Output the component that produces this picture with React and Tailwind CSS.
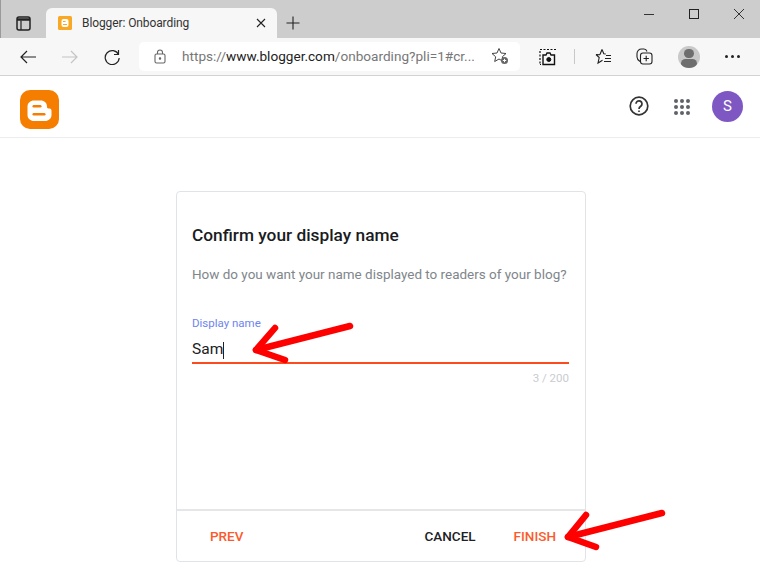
import React from "react";

function Logo() {
  return (
    <svg className="mt-[5px]" width="39" height="39" viewBox="0 0 39 39">
      <rect width="39" height="39" rx="10" fill="#f57d00" />
      <path d="M14 10.500h6.500c4 0 6.500 2.500 6.500 6v.5c0 1.200 1 1.500 2.500 1.500s2 1 2 2.500v4c0 3.500-3 6-6.500 6H14c-3.500 0-6.500-2.500-6.500-6V16.500c0-3.500 3-6 6.500-6z" fill="#fff" />
      <rect x="12.500" y="15" width="9" height="2.500" rx="1.250" fill="#f57d00" />
      <rect x="12.500" y="23" width="13" height="2.500" rx="1.250" fill="#f57d00" />
    </svg>
  );
}

function Favicon() {
  return (
    <svg width="14" height="14" viewBox="0 0 14 14">
      <rect width="14" height="14" rx="1.500" fill="#f9a825" />
      <rect x="3.500" y="3" width="7" height="8" rx="2" fill="#fff" />
      <rect x="5" y="5" width="2.500" height="1" fill="#f9a825" />
      <rect x="5" y="8" width="4" height="1" fill="#f9a825" />
    </svg>
  );
}

function TabStrip() {
  return (
    <div className="flex h-[38px] bg-[#cdcdcd] border-l border-l-[#9a9a9a]">
      <div className="w-[45px] flex items-center justify-center pt-[8px]">
        <svg width="15" height="15" viewBox="0 0 15 15" fill="none" stroke="#222" strokeWidth="1.500">
          <rect x="1" y="1" width="13" height="13" rx="2" />
          <path d="M1 3.500h13" strokeWidth="2.500" />
          <path d="M5 4.500V14" strokeWidth="1.200" />
        </svg>
      </div>
      <div className="mt-[8px] w-[231px] h-[30px] bg-[#f7f7f7] rounded-t-[6px] flex items-center pl-[12px] pr-[11px]">
        <Favicon />
        <span className="ml-[10px] text-[12px] tracking-[-0.1px] text-[#333] flex-1">Blogger: Onboarding</span>
        <svg width="10" height="10" viewBox="0 0 10 10" stroke="#222" strokeWidth="1.100">
          <path d="M1 1l8 8M9 1l-8 8" />
        </svg>
      </div>
      <div className="ml-[9px] flex items-center pt-[8px]">
        <svg width="14" height="14" viewBox="0 0 14 14" stroke="#222" strokeWidth="1.100">
          <path d="M7 0.500v13M0.500 7h13" />
        </svg>
      </div>
      <div className="ml-auto flex items-start pt-[8px] pr-[15px] gap-[33px]">
        <svg width="12" height="12" viewBox="0 0 12 12" stroke="#333" strokeWidth="1">
          <path d="M1 6.500h10" />
        </svg>
        <svg width="12" height="12" viewBox="0 0 12 12" fill="none" stroke="#222" strokeWidth="1">
          <rect x="1.500" y="1.500" width="9" height="9" />
        </svg>
        <svg width="12" height="12" viewBox="0 0 12 12" stroke="#333" strokeWidth="1">
          <path d="M1 1l10 10M11 1L1 11" />
        </svg>
      </div>
    </div>
  );
}

function Toolbar() {
  return (
    <div className="flex items-center h-[38px] bg-[#f7f7f7] border-b border-[#d2d2d2] relative">
      <div className="flex items-center pl-[20px] gap-[26px]">
        <svg width="16" height="14" viewBox="0 0 16 14" fill="none" stroke="#222" strokeWidth="1.200">
          <path d="M16 7H1M7 1L1 7l6 6" />
        </svg>
        <svg width="16" height="14" viewBox="0 0 16 14" fill="none" stroke="#c4c4c4" strokeWidth="1.200">
          <path d="M0 7h15M9 1l6 6-6 6" />
        </svg>
        <svg width="16" height="16" viewBox="0 0 16 16" fill="none" stroke="#222" strokeWidth="1.200">
          <path d="M14.500 5.500A7 7 0 1 0 15.200 9" />
          <path d="M14.500 1v4.500H10" />
        </svg>
      </div>
      <div className="ml-[19px] w-[381px] h-[29px] bg-white rounded-[5px] flex items-center pl-[15px] pr-[11px] mt-[-1px]">
        <svg width="12" height="15" viewBox="0 0 12 15" fill="none" stroke="#666" strokeWidth="1.100">
          <rect x="1" y="5" width="10" height="9" rx="1.500" />
          <path d="M3.500 5V3.500a2.500 2.500 0 0 1 5 0V5" />
          <circle cx="6" cy="9.500" r="0.700" fill="#666" />
        </svg>
        <span className="ml-[16px] text-[13.600px] text-[#777] flex-1 whitespace-nowrap">
          https://<span className="text-[#222]">www.blogger.com</span>/onboarding?pli=1#cr...
        </span>
        <svg width="18" height="18" viewBox="0 0 18 18" fill="none" stroke="#444" strokeWidth="1">
          <path d="M8 1.500l2 4.500 5 .5-3.700 3.300 1 4.700L8 12l-4.300 2.500 1-4.700L1 6.500l5-.5z" />
          <circle cx="13.500" cy="13.500" r="3.500" fill="#666" stroke="none" />
          <path d="M13.500 11.800v3.400M11.800 13.500h3.400" stroke="#fff" />
        </svg>
      </div>
      <div className="ml-[19px]">
        <svg width="18" height="18" viewBox="0 0 18 18" fill="none" stroke="#111">
          <path d="M1 1.500h16" strokeDasharray="2 1.500" strokeWidth="1.200" />
          <path d="M1 3v13M1 16.500h1" strokeDasharray="2 1.500" strokeWidth="1.200" />
          <path d="M4 16.500V7h3l1-2h3l1 2h3.500v9.500z" strokeWidth="1.400" />
          <circle cx="9.800" cy="11.500" r="2" fill="#111" />
        </svg>
      </div>
      <div className="ml-[17px] w-px h-[15px] bg-[#c8c8c8]" />
      <div className="ml-[20px]">
        <svg width="17" height="17" viewBox="0 0 17 17" fill="none" stroke="#222" strokeWidth="1.100">
          <path d="M7 1.500l1.800 4.300 2 .2M1 6.500l4 .2M7 1.500L5 6.500M1 6.500l3.200 3L3 15l4.500-2.800" />
          <path d="M11 7.500h5M10 10.500h6M9 13.500h7" />
        </svg>
      </div>
      <div className="ml-[24px]">
        <svg width="17" height="17" viewBox="0 0 17 17" fill="none" stroke="#222" strokeWidth="1.100">
          <rect x="4.500" y="5" width="11.500" height="11" rx="2.500" />
          <path d="M10.200 7.800v5.400M7.500 10.500h5.400" />
          <path d="M4 13.500C2.500 12.500 1 11 1 9V5.500C1 3 3 1 5.500 1H8c1.500 0 2.500 1 3 2.500" />
        </svg>
      </div>
      <div className="ml-[25px] w-[22px] h-[22px] rounded-full bg-[#c9c9c9] overflow-hidden flex flex-col items-center">
        <div className="w-[10px] h-[10px] rounded-full bg-[#6e6e6e] mt-[3px]" />
        <div className="w-[16px] h-[10px] rounded-full bg-[#6e6e6e] mt-[1px]" />
      </div>
      <div className="ml-[25px] flex gap-[3px]">
        <div className="w-[3px] h-[3px] rounded-full bg-[#222]" />
        <div className="w-[3px] h-[3px] rounded-full bg-[#222]" />
        <div className="w-[3px] h-[3px] rounded-full bg-[#222]" />
      </div>
    </div>
  );
}

function AppHeader() {
  return (
    <div className="flex items-center h-[62px] bg-white border-b border-[#ececec] pl-[20px] pr-[17px]">
      <Logo />
      <div className="ml-auto flex items-center">
        <svg className="mb-[2px]" width="20" height="20" viewBox="0 0 20 20" fill="none" stroke="#333" strokeWidth="1.700">
          <circle cx="10" cy="10" r="8.800" />
          <path d="M7 7.800a3 3 0 1 1 4.800 2.400c-1.200.9-1.800 1.300-1.800 2.800" />
          <circle cx="10" cy="15.200" r="0.500" fill="#333" strokeWidth="1" />
        </svg>
        <div className="ml-[25px] grid grid-cols-3 gap-[2px]">
          {[1, 2, 3, 4, 5, 6, 7, 8, 9].map((dot) => (
            <div key={dot} className="w-[4px] h-[4px] rounded-full bg-[#5f6368]" />
          ))}
        </div>
        <div className="ml-[22px] w-[31px] h-[31px] rounded-full bg-[#7e57c2] flex items-center justify-center text-white text-[15px]">
          S
        </div>
      </div>
    </div>
  );
}

function Card() {
  return (
    <div className="w-[410px] h-[371px] ml-[176px] mt-[53px] border border-[#e0e4e8] rounded-[4px] flex flex-col bg-white">
      <div className="flex-1 pl-[15px] pr-[16px] pt-[32px]">
        <h1 className="text-[17.300px] leading-[22px] font-medium text-[#1a1c1e]">Confirm your display name</h1>
        <p className="mt-[19px] text-[13.470px] leading-[20px] text-[#80868b] whitespace-nowrap">How do you want your name displayed to readers of your blog?</p>
        <div className="mt-[31px] text-[11.500px] leading-[14px] text-[#6d85ee]">Display name</div>
        <div className="mt-[9px] h-[22px] flex items-center text-[15.500px] text-[#202124] border-b-2 border-[#fc4c1f] box-content pb-[1px]">
          Sam<span className="w-px h-[17px] bg-[#202124]" />
        </div>
        <div className="mt-[7px] text-right text-[11.500px] leading-[14px] text-[#c9ccd0]">3 / 200</div>
      </div>
      <div className="h-[52px] border-t-2 border-[#e4e6e8] flex items-center pl-[33px] pr-[29px] text-[13.500px] font-medium">
        <span className="text-[#fc5a2b]">PREV</span>
        <span className="ml-auto text-[#202124]">CANCEL</span>
        <span className="ml-[38px] text-[#fc5a2b]">FINISH</span>
      </div>
    </div>
  );
}

export default function App() {
  return (
    <div className="relative w-[760px] h-[586px] overflow-hidden bg-white font-['Roboto',sans-serif]">
      <TabStrip />
      <Toolbar />
      <AppHeader />
      <Card />

      {/* red annotation arrows */}
      <svg className="absolute left-0 top-0 pointer-events-none" width="760" height="586" fill="none" stroke="#fe0000" strokeWidth="6.500" strokeLinecap="round" strokeLinejoin="round">
        <path d="M350 326L256 350" />
        <path d="M275 328L256 350L285 360" />
        <path d="M662 513L568 537" />
        <path d="M586 515L568 537L596 547" />
      </svg>
    </div>
  );
}
